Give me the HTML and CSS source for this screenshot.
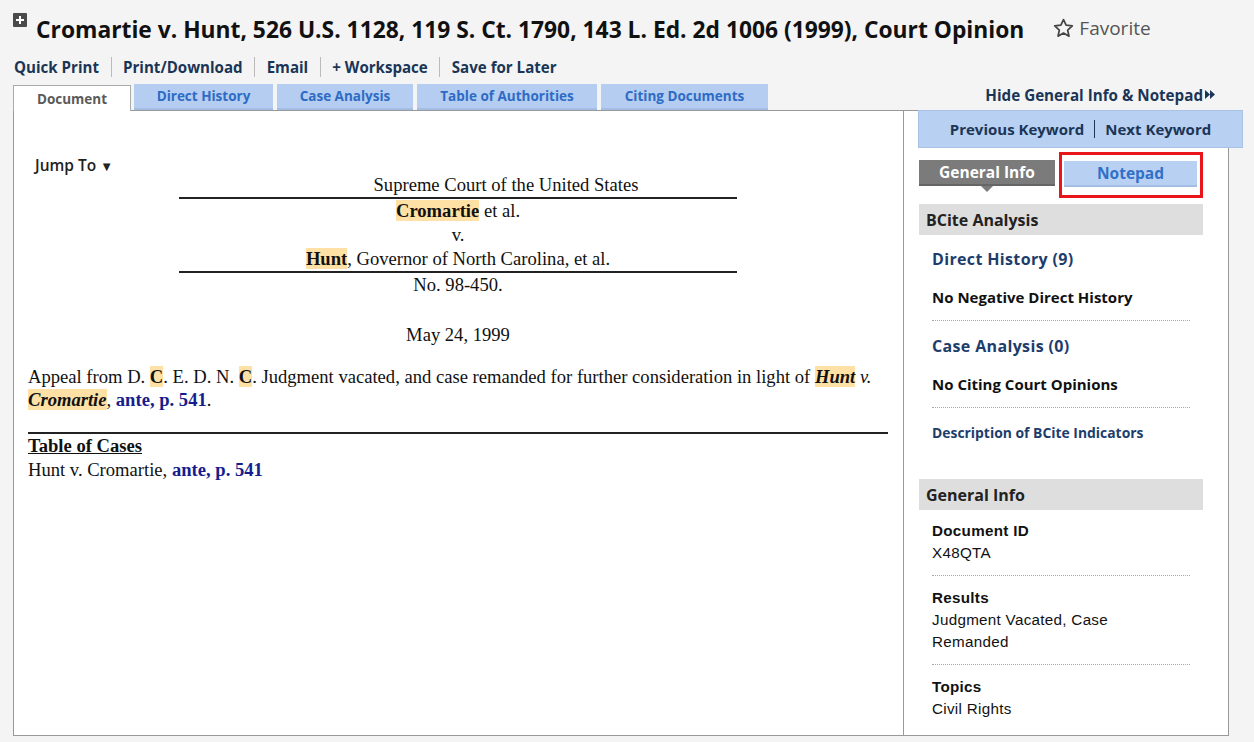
FILE: index.html
```html
<!DOCTYPE html>
<html>
<head>
<meta charset="utf-8">
<link rel="stylesheet" href="styles.css">
</head>
<body>
<div class="page">
  <header class="title-row">
    <span class="expand-icon"><svg width="14" height="14" viewBox="0 0 14 14"><rect width="14" height="14" rx="1" fill="#4a4a4a"/><path d="M7 3v8M3 7h8" stroke="#fff" stroke-width="2"/></svg></span>
    <h1 class="title">Cromartie v. Hunt, 526 U.S. 1128, 119 S. Ct. 1790, 143 L. Ed. 2d 1006 (1999), Court Opinion</h1>
    <span class="favorite"><svg width="21" height="20" viewBox="0 0 24 23"><path d="M12 1.8l3 6.5 7.1.8-5.3 4.8 1.5 7-6.3-3.6-6.3 3.6 1.5-7L1.9 9.1 9 8.3z" fill="none" stroke="#444" stroke-width="2" stroke-linejoin="round"/></svg>Favorite</span>
  </header>

  <nav class="toolbar">
    <a>Quick Print</a><span class="sep"></span>
    <a>Print/Download</a><span class="sep"></span>
    <a>Email</a><span class="sep"></span>
    <a>+ Workspace</a><span class="sep"></span>
    <a>Save for Later</a>
  </nav>

  <div class="tab-row">
    <div class="tabs">
      <span class="tab active">Document</span>
      <span class="tab">Direct History</span>
      <span class="tab">Case Analysis</span>
      <span class="tab">Table of Authorities</span>
      <span class="tab">Citing Documents</span>
    </div>
    <a class="hide-link">Hide General Info &amp; Notepad<svg class="dbl" width="10" height="9" viewBox="0 0 10 9"><path d="M0 0l5 4.5L0 9zM5 0l5 4.5L5 9z" fill="#1b3556"/></svg></a>
  </div>

  <div class="main-box">
    <section class="doc">
      <div class="jump">Jump To <span class="tri">&#9660;</span></div>
      <div class="caption">
        <div class="cap-line ruled court">Supreme Court of the United States</div>
        <div class="cap-line"><b class="hl">Cromartie</b> et al.</div>
        <div class="cap-line">v.</div>
        <div class="cap-line ruled"><b class="hl">Hunt</b>, Governor of North Carolina, et al.</div>
        <div class="cap-line">No. 98-450.</div>
      </div>
      <div class="date">May 24, 1999</div>
      <p class="para">Appeal from D. <b class="hl">C</b>. E. D. N. <b class="hl">C</b>. Judgment vacated, and case remanded for further consideration in light of <i><b class="hl">Hunt</b> v. <b class="hl">Cromartie</b></i>, <a class="cite">ante, p. 541</a>.</p>
      <div class="toc">
        <div class="toc-title">Table of Cases</div>
        <div>Hunt v. Cromartie, <a class="cite">ante, p. 541</a></div>
      </div>
    </section>

    <aside class="side">
      <div class="kw-bar"><a>Previous Keyword</a><span class="kw-sep"></span><a>Next Keyword</a></div>
      <div class="side-tabs">
        <span class="stab gi">General Info</span>
        <span class="stab-wrap"><span class="stab np">Notepad</span></span>
      </div>
      <div class="sec-head">BCite Analysis</div>
      <div class="bcite">
        <a class="blink">Direct History (9)</a>
        <div class="bstat">No Negative Direct History</div>
        <div class="dots"></div>
        <a class="blink">Case Analysis (0)</a>
        <div class="bstat">No Citing Court Opinions</div>
        <div class="dots"></div>
        <a class="blink small">Description of BCite Indicators</a>
      </div>
      <div class="sec-head">General Info</div>
      <dl class="info">
        <dt>Document ID</dt>
        <dd>X48QTA</dd>
        <div class="dots"></div>
        <dt>Results</dt>
        <dd>Judgment Vacated, Case Remanded</dd>
        <div class="dots"></div>
        <dt>Topics</dt>
        <dd>Civil Rights</dd>
      </dl>
    </aside>
  </div>
</div>
</body>
</html>
```

FILE: styles.css
```css
* { box-sizing: border-box; }
html, body { margin: 0; padding: 0; }
body {
  background: #f4f4f4;
  font-family: "Open Sans", "Liberation Sans", sans-serif;
  color: #1a1a1a;
  width: 1254px;
  height: 742px;
  overflow: hidden;
}
a { text-decoration: none; cursor: pointer; }

.page { padding: 0 0 0 13px; }

.title-row {
  display: flex;
  align-items: center;
  height: 57px;
  padding-top: 2px;
}
.expand-icon { display: flex; align-self: flex-start; margin-top: 11px; width: 23px; }
.title {
  margin: 0;
  font-size: 22.8px;
  font-weight: 700;
  color: #111;
  white-space: nowrap;
}
.favorite {
  display: flex;
  align-items: center;
  gap: 5px;
  margin-left: 29px;
  margin-top: -3px;
  font-size: 19px;
  color: #555;
}

.toolbar {
  display: flex;
  align-items: center;
  height: 20px;
  padding-left: 1px;
}
.toolbar a {
  font-size: 15.1px;
  font-weight: 700;
  color: #1b3556;
}
.toolbar .sep {
  width: 1px;
  height: 20px;
  background: #bbb;
  margin: 0 11.5px;
}

.tab-row {
  display: flex;
  align-items: flex-end;
  margin-top: 7px;
  height: 26px;
}
.tabs { display: flex; gap: 4px; }
.tab {
  height: 26px;
  display: flex;
  align-items: center;
  justify-content: center;
  background: #b4cdf0;
  border-bottom: 2px solid #a3bde4;
  color: #2e6bc5;
  font-size: 13.5px;
  font-weight: 700;
}
.tab:nth-child(1) { width: 118px; }
.tab:nth-child(2) { width: 139px; }
.tab:nth-child(3) { width: 136px; }
.tab:nth-child(4) { width: 180px; }
.tab:nth-child(5) { width: 167px; }
.tab.active {
  background: #fff;
  color: #5a5a5a;
  border: 1px solid #aaa;
  border-bottom: none;
  position: relative;
  top: 1px;
  height: 26px;
  margin-right: -1px;
}
.hide-link {
  margin-left: auto;
  margin-right: 39px;
  margin-bottom: 5px;
  font-size: 15.2px;
  font-weight: 700;
  color: #1b3556;
  display: flex;
  align-items: center;
}
.hide-link .dbl { margin-left: 2px; margin-top: -2px; }

.main-box {
  display: flex;
  width: 1216px;
  height: 626px;
  background: #fff;
  border: 1px solid #999;
}

.doc {
  flex: 1;
  padding: 46px 15px 0 14px;
  font-family: "Liberation Serif", "Times New Roman", serif;
  font-size: 18.6px;
  color: #111;
}
.jump {
  font-family: "Open Sans", "Liberation Sans", sans-serif;
  font-size: 15.5px;
  font-weight: 600;
  color: #222;
  margin-left: 7px;
  height: 16px;
  line-height: 16px;
}
.jump .tri { font-size: 13px; }
.caption {
  width: 558px;
  margin: 0 auto;
  text-align: center;
  line-height: 24px;
}
.cap-line.ruled { border-bottom: 2px solid #222; }
.cap-line.court { padding-left: 96px; }
.hl { background: #ffe1a6; }
.date { text-align: center; margin-top: 26px; line-height: 24px; }
.para { margin: 18px 0 0 0; line-height: 23px; }
.cite { color: #161d8c; font-weight: 700; }
.toc {
  margin-top: 21px;
  border-top: 2px solid #222;
  line-height: 24px;
}
.toc-title { font-weight: 700; text-decoration: underline; }

.side {
  width: 325px;
  border-left: 1px solid #999;
  padding: 0 25px 0 15px;
  position: relative;
}
.kw-bar {
  margin: -1px -40px 0 -1px;
  height: 38px;
  background: #b8d0f1;
  border: 1px solid #a9c2e6;
  display: flex;
  align-items: center;
  justify-content: center;
  gap: 10px;
  font-size: 15px;
  font-weight: 700;
}
.kw-bar a { color: #1b3556; }
.kw-sep { width: 1px; height: 18px; background: #1b3556; }

.side-tabs {
  display: flex;
  margin-top: 12px;
  height: 37px;
  align-items: flex-start;
}
.stab {
  display: flex;
  align-items: center;
  justify-content: center;
  height: 26px;
  font-size: 15.5px;
  font-weight: 700;
}
.stab.gi {
  width: 136px;
  background: #7b7b7b;
  color: #fff;
  border-bottom: 2px solid #666;
  position: relative;
}
.stab.gi::after {
  content: "";
  position: absolute;
  left: 62px;
  bottom: -8px;
  border-left: 6px solid transparent;
  border-right: 6px solid transparent;
  border-top: 6px solid #7b7b7b;
}
.stab-wrap {
  margin-left: 4px;
  margin-top: -8px;
  border: 3px solid #e8161b;
  padding: 6px 3px 8px 2px;
}
.stab.np {
  width: 133px;
  background: #b8d0f1;
  color: #3070c8;
  border-bottom: 2px solid #a4bde6;
}

.sec-head {
  height: 31px;
  background: #dedede;
  display: flex;
  align-items: center;
  padding-left: 7px;
  font-size: 16px;
  font-weight: 700;
  color: #222;
  margin-top: 7px;
}
.bcite { padding: 13px 13px 0 13px; display: flex; flex-direction: column; }
.blink { color: #1d3d6b; font-size: 16px; letter-spacing: 0.35px; font-weight: 700; line-height: 22px; }
.blink.small { font-size: 13.9px; letter-spacing: 0; }
.bstat { font-size: 15px; font-weight: 700; color: #111; line-height: 22px; margin-top: 16px; }
.bcite .dots { margin: 12px 0 14px 0; }
.dots { border-top: 1px dotted #aaa; height: 0; }
.bcite + .sec-head { margin-top: 35px; }

.info {
  margin: 0;
  padding: 10px 13px 0 13px;
  font-family: "Liberation Sans", Arial, sans-serif;
  font-size: 15.2px;
  color: #111;
  letter-spacing: 0.3px;
}
.info dt { font-weight: 700; line-height: 22px; }
.info dd { margin: 0; line-height: 22px; max-width: 225px; }
.info .dots { margin: 11px 0 11px 0; }
```
